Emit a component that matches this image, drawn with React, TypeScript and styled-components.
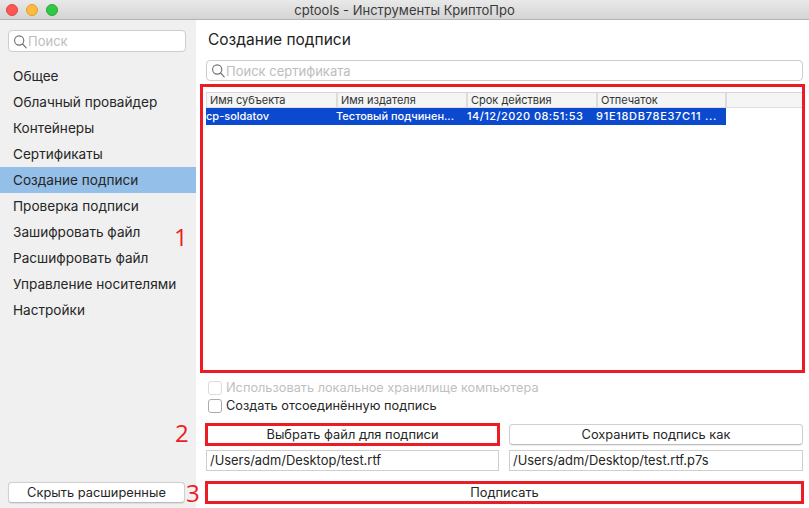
import React from "react";
import styled, { createGlobalStyle } from "styled-components";

const Global = createGlobalStyle`
  html, body { margin: 0; padding: 0; background: #fff; }
  body { font-family: "Inter", "Roboto", "Liberation Sans", sans-serif; color: #222; -webkit-font-smoothing: antialiased; }
  * { box-sizing: border-box; }
`;

const Window = styled.div`
  width: 809px;
  height: 508px;
  display: flex;
  flex-direction: column;
  overflow: hidden;
`;

const TitleBar = styled.header`
  height: 20px;
  flex: none;
  display: flex;
  align-items: center;
  position: relative;
  padding-left: 6px;
  gap: 8px;
  background: linear-gradient(#e9e9e9, #d4d4d4);
  border-bottom: 1px solid #b4b4b4;
`;

const Light = styled.span<{ $color: string; $edge: string }>`
  width: 12px;
  height: 12px;
  border-radius: 50%;
  background: ${(p) => p.$color};
  border: 1px solid ${(p) => p.$edge};
`;

const WindowTitle = styled.div`
  position: absolute;
  left: 0;
  right: 0;
  text-align: center;
  font-size: 13px;
  line-height: 18px;
  color: #3a3a3a;
`;

const Body = styled.div`
  flex: 1;
  display: flex;
  min-height: 0;
`;

const Sidebar = styled.aside`
  width: 196px;
  flex: none;
  display: flex;
  flex-direction: column;
  background: #f0f0f0;
  padding: 10px 0 5px;
`;

const SearchBox = styled.div<{ $sidebar?: boolean }>`
  height: ${(p) => (p.$sidebar ? "22px" : "21px")};
  flex: none;
  margin: ${(p) => (p.$sidebar ? "0 10px 0 8px" : "0")};
  display: flex;
  align-items: center;
  gap: 1px;
  padding-left: 4px;
  background: #fff;
  border: 1px solid #cdcdcd;
  border-radius: 4px;
  font-size: 13px;
  color: #bdbdbd;
`;

const NavList = styled.nav`
  margin-top: 11px;
  display: flex;
  flex-direction: column;
  flex: 1;
`;

const NavItem = styled.div<{ $active?: boolean }>`
  height: 26px;
  line-height: 26px;
  padding-left: 13px;
  font-size: 13.6px;
  color: #262626;
  background: ${(p) => (p.$active ? "#93bfe8" : "transparent")};
`;

const PushButton = styled.button<{ $sidebar?: boolean }>`
  display: block;
  height: 21px;
  ${(p) => (p.$sidebar ? "margin: 0 11px 0 8px;" : "width: 100%;")}
  padding: 0;
  background: #fff;
  border: 1px solid #d0d0d0;
  border-bottom-color: #bcbcbc;
  border-radius: 4px;
  font-family: inherit;
  font-size: 12.85px;
  color: #262626;
  box-shadow: 0 0.5px 1px rgba(0, 0, 0, 0.08);
`;

const Main = styled.main`
  flex: 1;
  min-width: 0;
  background: #fff;
  display: flex;
  flex-direction: column;
  padding: 0 6px 5px 10px;
`;

const Title = styled.h1`
  margin: 0;
  height: 40px;
  flex: none;
  padding: 10px 0 0 2px;
  font-size: 15.5px;
  line-height: 20px;
  font-weight: 400;
  color: #222;
`;

const Table = styled.div`
  margin-top: 11px;
  height: 283px;
  display: flex;
  flex-direction: column;
  align-items: flex-start;
`;

const HeaderRow = styled.div`
  width: 100%;
  height: 16px;
  flex: none;
  display: flex;
  background: #f5f5f5;
  border-top: 1px solid #d4d4d4;
  border-bottom: 1px solid #dcdcdc;
`;

const Row = styled.div`
  display: flex;
  flex: none;
  height: 17px;
  background: #0b49cf;
`;

const HeadCell = styled.div`
  width: 130px;
  padding-left: 3px;
  border-left: 2px solid #dcdcdc;
  font-size: 11px;
  line-height: 14px;
  color: #333;
  white-space: nowrap;
  &:first-child { border-left-width: 1px; }
`;

const HeadEnd = styled.div`
  width: 2px;
  margin-left: -1px;
  background: #dcdcdc;
`;

const Cell = styled.div<{ $spread?: string; $indent?: number }>`
  width: 130px;
  flex: none;
  padding-left: ${(p) => p.$indent || 0}px;
  font-size: 11px;
  line-height: 17px;
  font-weight: 500;
  letter-spacing: ${(p) => p.$spread || "0"};
  color: #fff;
  white-space: nowrap;
  overflow: hidden;
`;

const Options = styled.div`
  margin-top: 6px;
  display: flex;
  flex-direction: column;
  gap: 4px;
`;

const CheckRow = styled.label<{ $disabled?: boolean }>`
  height: 14px;
  display: flex;
  align-items: center;
  gap: 4px;
  padding-left: 2px;
  font-size: 12.75px;
  line-height: 14px;
  color: ${(p) => (p.$disabled ? "#bfbfbf" : "#262626")};
`;

const Box = styled.span<{ $disabled?: boolean }>`
  width: 14px;
  height: 14px;
  flex: none;
  background: #fff;
  border: 1px solid ${(p) => (p.$disabled ? "#dcdcdc" : "#ababab")};
  border-radius: 3px;
`;

const FileGrid = styled.div`
  margin-top: 11px;
  display: grid;
  grid-template-columns: 293px 294px;
  column-gap: 10px;
  row-gap: 5px;
`;

const PathField = styled.div`
  height: 21px;
  padding-left: 3px;
  border: 1px solid #cfcfcf;
  font-size: 12.9px;
  line-height: 19px;
  color: #262626;
  background: #fff;
  white-space: nowrap;
`;

const SignRow = styled.div`
  margin-top: 11px;
`;

const Marked = styled.div`
  position: relative;
`;

const RedFrame = styled.div<{ $inset: string }>`
  position: absolute;
  inset: ${(p) => p.$inset};
  border: 3px solid #ed1c24;
  pointer-events: none;
`;

const Numeral = styled.span<{ $left: number; $top: number }>`
  position: absolute;
  left: ${(p) => p.$left}px;
  top: ${(p) => p.$top}px;
  font-family: "Open Sans", "Liberation Sans", sans-serif;
  font-size: 24px;
  line-height: 28px;
  color: #ed1c24;
`;

const GlassIcon = styled.svg`
  flex: none;
`;

const Glass = () => (
  <GlassIcon width="14" height="15" viewBox="0 0 14 15" fill="none" stroke="#6f6f6f" strokeWidth="1.1">
    <circle cx="6.2" cy="6.5" r="4.6" />
    <path d="M9.6 10l3.6 3.8" strokeLinecap="round" />
  </GlassIcon>
);

const nav = ["Общее", "Облачный провайдер", "Контейнеры", "Сертификаты", "Создание подписи", "Проверка подписи", "Зашифровать файл", "Расшифровать файл", "Управление носителями", "Настройки"];

export default function App() {
  return (
    <Window>
      <Global />
      <TitleBar>
        <Light $color="#fc5753" $edge="#df4744" />
        <Light $color="#fdbc40" $edge="#de9f34" />
        <Light $color="#33c748" $edge="#27aa35" />
        <WindowTitle>cptools - Инструменты КриптоПро</WindowTitle>
      </TitleBar>
      <Body>
        <Sidebar>
          <SearchBox $sidebar>
            <Glass />
            Поиск
          </SearchBox>
          <NavList>
            {nav.map((n) => (
              <NavItem key={n} $active={n === "Создание подписи"}>{n}</NavItem>
            ))}
          </NavList>
          <PushButton $sidebar>Скрыть расширенные</PushButton>
        </Sidebar>
        <Main>
          <Title>Создание подписи</Title>
          <SearchBox>
            <Glass />
            Поиск сертификата
          </SearchBox>
          <Marked>
            <Table>
              <HeaderRow>
                <HeadCell>Имя субъекта</HeadCell>
                <HeadCell>Имя издателя</HeadCell>
                <HeadCell>Срок действия</HeadCell>
                <HeadCell>Отпечаток</HeadCell>
                <HeadEnd />
              </HeaderRow>
              <Row>
                <Cell>cp-soldatov</Cell>
                <Cell>Тестовый подчинен...</Cell>
                <Cell $spread="0.45px" $indent={1}>14/12/2020 08:51:53</Cell>
                <Cell $spread="0.7px">91E18DB78E37C11 ...</Cell>
              </Row>
            </Table>
            <RedFrame $inset="3px -2px 2px -6px" />
            <Numeral $left={-32} $top={142}>1</Numeral>
          </Marked>
          <Options>
            <CheckRow $disabled><Box $disabled />Использовать локальное хранилище компьютера</CheckRow>
            <CheckRow><Box />Создать отсоединённую подпись</CheckRow>
          </Options>
          <FileGrid>
            <Marked>
              <PushButton>Выбрать файл для подписи</PushButton>
              <RedFrame $inset="-1px" />
              <Numeral $left={-31} $top={-5}>2</Numeral>
            </Marked>
            <PushButton>Сохранить подпись как</PushButton>
            <PathField>/Users/adm/Desktop/test.rtf</PathField>
            <PathField>/Users/adm/Desktop/test.rtf.p7s</PathField>
          </FileGrid>
          <SignRow>
            <Marked>
              <PushButton>Подписать</PushButton>
              <RedFrame $inset="-1px" />
              <Numeral $left={-20} $top={-3}>3</Numeral>
            </Marked>
          </SignRow>
        </Main>
      </Body>
    </Window>
  );
}
